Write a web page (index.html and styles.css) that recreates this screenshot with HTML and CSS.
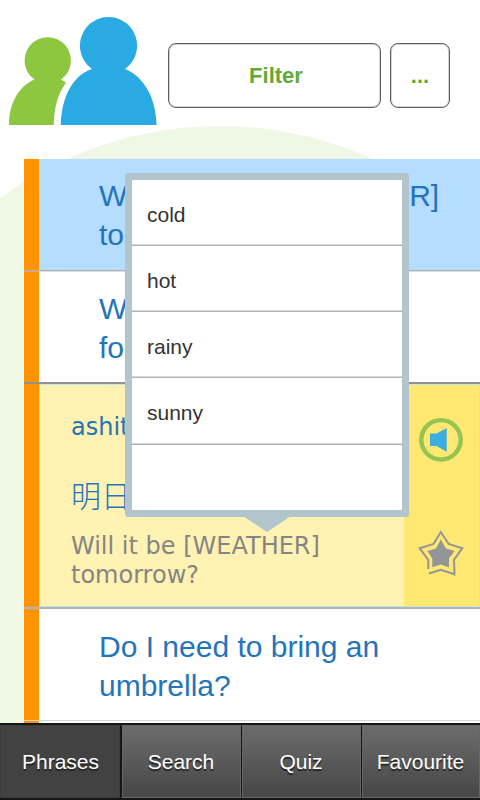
FILE: index.html
```html
<!DOCTYPE html>
<html lang="en">
<head>
  <meta charset="UTF-8">
  <meta name="viewport" content="width=device-width, initial-scale=1.0">
  <title>Phrases</title>
  <link rel="stylesheet" href="styles.css">
</head>
<body>
  <div class="app">
    <div class="bg-circle"></div>

    <div class="header">
      <svg class="logo" width="148" height="110" viewBox="9 15 148 110">
        <path fill="#8dc73f" d="M9 125C9 103 19 86 34.500 79.500A23.200 23.200 0 1 1 61 79.500L66 82.500C58 94 54 107 53.800 125Z"/>
        <path fill="#29aae2" d="M60.800 125C61.500 97 73 75 92 69A28.600 28.600 0 1 1 125 69C143 76 156 97 156.600 125Z"/>
      </svg>
      <button class="filter-btn">Filter</button>
      <button class="more-btn">...</button>
    </div>

    <div class="list">
      <div class="phrase selected">Will it be <span class="slot">[WEATHER]</span><br>tomorrow?</div>
      <div class="phrase second">What is the weather<br>forecast?</div>
      <div class="detail">
        <div class="detail-text">
          <p class="romaji">ashita wa</p>
          <p class="kanji" lang="ja">明日は</p>
          <p class="english">Will it be [WEATHER] tomorrow?</p>
        </div>
        <div class="detail-actions">
          <svg width="46" height="46" viewBox="0 0 46 46">
            <circle cx="23" cy="22.800" r="19.700" fill="none" stroke="#94c552" stroke-width="4.400"/>
            <path fill="#3badde" d="M12 16.500H18.500L28.700 11V34.800L18.500 29H12Z"/>
          </svg>
          <svg width="46" height="46" viewBox="0 0 46 46">
            <path fill="none" stroke="#949599" stroke-width="2" d="M10.300 39V30L1.700 18.200L15.500 14L22.800 2L30.700 14L44.300 18.200L36 29.700L36.500 44.300L22.800 39.800L10.800 43.500"/>
            <path fill="#949599" d="M22.800 9.500L28 18.500L36.500 21L31 28.500V37.500L22.800 34.500L14.300 37.200V28.500L9.300 21L18 18.500Z"/>
          </svg>
        </div>
      </div>
      <div class="phrase last">Do I need to bring an umbrella?</div>
    </div>

    <div class="tabs">
      <div class="tab active">Phrases</div>
      <div class="tab">Search</div>
      <div class="tab">Quiz</div>
      <div class="tab">Favourite</div>
    </div>

    <div class="popup">
      <div class="option">cold</div>
      <div class="option">hot</div>
      <div class="option">rainy</div>
      <div class="option">sunny</div>
    </div>
  </div>
</body>
</html>
```

FILE: styles.css
```css
* {
  box-sizing: border-box;
}

body {
  margin: 0;
  font-family: "Liberation Sans", Arial, sans-serif;
  background-color: #fff;
}

.app {
  position: relative;
  width: 480px;
  height: 800px;
  overflow: hidden;
  display: flex;
  flex-direction: column;
}

.bg-circle {
  position: absolute;
  top: 126px;
  left: -151px;
  width: 742px;
  height: 742px;
  border-radius: 50%;
  background-color: #eff8e5;
}

.header {
  position: relative;
  height: 159px;
  padding: 15px 30px 0 9px;
  display: flex;
  align-items: flex-start;
}

.logo {
  margin-right: 11px;
}

.header button {
  height: 65px;
  margin-top: 28px;
  padding: 0;
  border: 1px solid #5f5f5f;
  border-radius: 8px;
  background-color: #fff;
  box-shadow: inset 0 0 0 1px #d4d4d4;
  color: #62a936;
  font-family: inherit;
  font-size: 22px;
  font-weight: bold;
}

.header .filter-btn {
  width: 213px;
  margin-right: 9px;
  padding-left: 3px;
}

.more-btn {
  width: 60px;
}

.list {
  position: relative;
  height: 564px;
  margin-left: 24px;
  background: linear-gradient(to right, #ff9400 15px, #fff 15px);
}

.phrase {
  height: 113px;
  padding: 17px 20px 0 75px;
  border-bottom: 1px solid #b0b0b0;
  box-shadow: 0 1px 0 rgba(190, 190, 190, 0.5);
  color: #2474bb;
  font-size: 30px;
  line-height: 39px;
}

.selected {
  height: 112px;
  background: linear-gradient(to right, #ff9400 15px, #b5ddff 15px);
  white-space: nowrap;
}

.second {
  padding-top: 18px;
  border-bottom: 2px solid #929292;
  box-shadow: none;
}

.last {
  height: 112px;
  padding-top: 18px;
  border-bottom-color: #d5d5d5;
  box-shadow: none;
}

.slot {
  margin-left: 54px;
}

.detail {
  height: 225px;
  padding-left: 15px;
  display: flex;
  border-bottom: 2px solid #b0b5b5;
  background: linear-gradient(to right, #ff9400 15px, #fff2b2 15px);
  font-family: "DejaVu Sans", sans-serif;
}

.detail-text {
  flex: 1;
  padding: 28px 20px 0 31px;
  border: 1px solid #c8e5e0;
  border-right: 0;
}

.detail-text p {
  margin: 0;
}

.romaji {
  color: #2474bb;
  font-size: 24px;
  line-height: 28px;
}

.kanji {
  padding-top: 23px;
  color: #2474bb;
  font-family: "Noto Sans CJK JP", sans-serif;
  font-size: 30px;
  font-weight: 300;
  line-height: 60px;
}

.detail-text .english {
  padding-top: 8px;
  color: #858585;
  font-size: 24px;
  line-height: 29px;
}

.detail-actions {
  width: 76px;
  padding: 32px 0 0 14px;
  display: flex;
  flex-direction: column;
  gap: 67px;
  border: 1px solid #c8e5e0;
  border-left: 0;
  background-color: #fee871;
}

.tabs {
  position: relative;
  height: 77px;
  display: flex;
  border-top: 2px solid #161616;
  border-bottom: 2px solid #161616;
  background-color: #161616;
}

.tab {
  width: 120px;
  display: flex;
  align-items: center;
  justify-content: center;
  border: 1px solid #666;
  border-left: 1px solid #161616;
  box-shadow: inset 1px 0 0 #666;
  background: linear-gradient(#6c6c6c, #474747);
  color: #fff;
  font-size: 21px;
  text-shadow: 0 2px 1px #222;
}

/* margin keeps the dark seam after the first tab */
.tab.active {
  margin-right: 1px;
  padding-left: 1px;
  border-color: #3d3d3d;
  box-shadow: none;
  background: #424242;
}

.tab:last-child {
  flex: 1;
}

/* word picker over the list */
.popup {
  position: absolute;
  top: 173px;
  left: 125px;
  width: 284px;
  height: 344px;
  border: 7px solid #b2c5cc;
  border-radius: 3px;
  background-color: #fff;
}

.popup::after {
  content: "";
  position: absolute;
  top: 336px;
  left: 111px;
  border: 24px solid transparent;
  border-top: 16px solid #b2c5cc;
  border-bottom: 0;
}

.option {
  height: 66px;
  padding: 4px 15px 0;
  border-bottom: 1px solid #b0b0b0;
  box-shadow: inset 0 -1px 0 #d8d8d8;
  color: #333;
  font-size: 21px;
  line-height: 62px;
}

.option:last-child {
  height: 67px;
}
```
